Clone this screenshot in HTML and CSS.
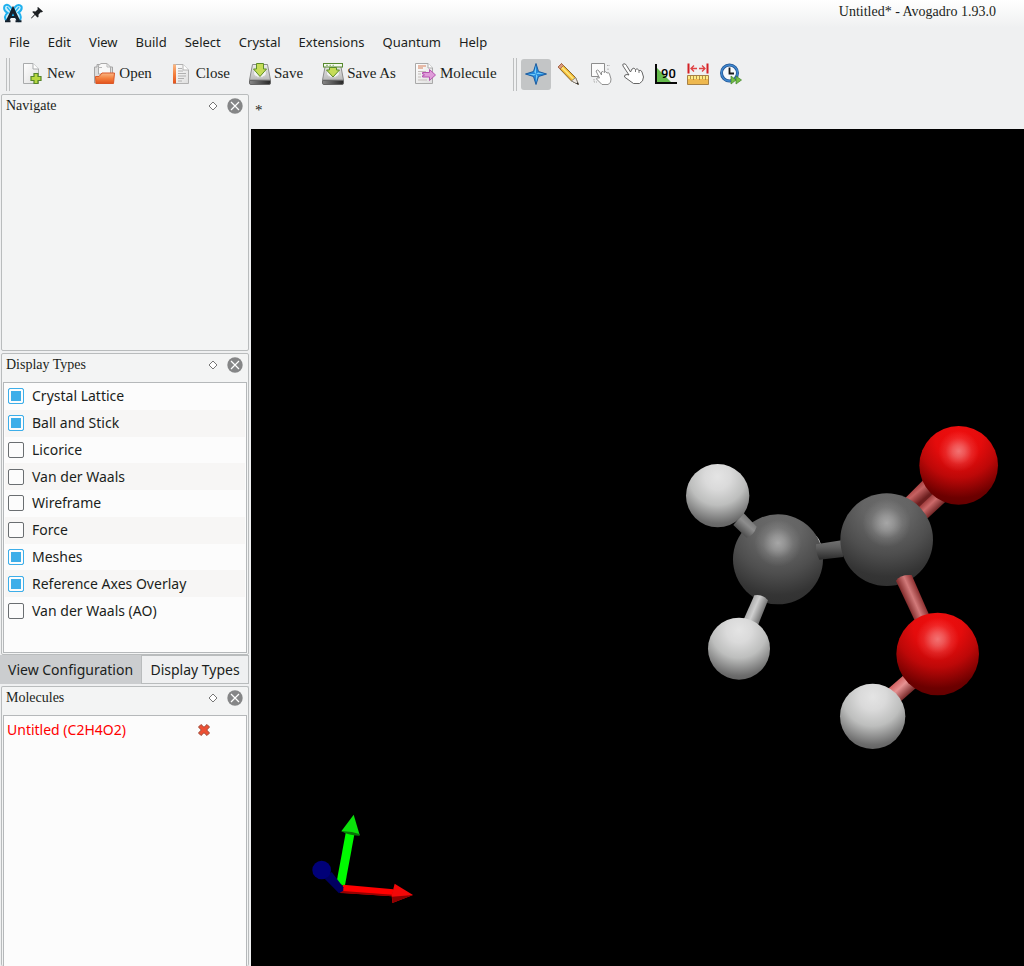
FILE: index.html
```html
<!DOCTYPE html>
<html lang="en">
<head>
<meta charset="utf-8">
<title>Untitled* - Avogadro 1.93.0</title>
<link rel="stylesheet" href="styles.css">
</head>
<body>
<header class="titlebar">
  <div class="titlebar-icons">
    <svg width="20" height="20" viewBox="0 0 20 20" aria-hidden="true">
      <path d="M1.500 3C4 0 8 3 10 8C12 2 16 .500 18.500 3.500C19.500 7 17 8.500 15.500 9.500C18.500 12 18.500 16 16 18L10 11L4 17.500C1 16 1.500 12 4.500 10C1.500 8.500 .500 5.500 1.500 3Z" fill="#c9effc" stroke="#1fb0ee" stroke-width="2"/>
      <path d="M4 4L8 9M16 4L12 9" stroke="#25b4ee" stroke-width="1.400"/>
      <path d="M4.500 18L10 6.500L15.500 18" fill="none" stroke="#14202c" stroke-width="3.200"/>
      <path d="M2 18.300H7.500M12.500 18.300H18.500M6.500 14H13.500" stroke="#14202c" stroke-width="2"/>
    </svg>
    <svg width="12" height="12" viewBox="0 0 12 12" aria-hidden="true">
      <path d="M7 0L12 4.500L10.500 5.500L10 5L7.500 7.500L7.500 10L6.500 10.500L4 8L0.500 11.500L0 11L3.500 7.300L1.300 5L2 4.200L4.500 4.500L7 2L6.200 1Z" fill="#1c1f22"/>
    </svg>
  </div>
  <h1 class="titlebar-text">Untitled* - Avogadro 1.93.0</h1>
</header>

<nav class="menubar" aria-label="Main menu">
  <button class="menu">File</button>
  <button class="menu">Edit</button>
  <button class="menu">View</button>
  <button class="menu">Build</button>
  <button class="menu">Select</button>
  <button class="menu">Crystal</button>
  <button class="menu">Extensions</button>
  <button class="menu">Quantum</button>
  <button class="menu">Help</button>
</nav>

<div class="toolbars">
  <span class="grip"></span>
  <div class="file-tools">
    <button class="file-tool">
      <svg width="22" height="22" viewBox="0 0 22 22" aria-hidden="true">
        <defs><linearGradient id="paper" x2="1" y2="1"><stop stop-color="#fff"/><stop offset="1" stop-color="#dedede"/></linearGradient></defs>
        <path d="M1.500 .500H11L16.500 6V20.500H1.500Z" fill="url(#paper)" stroke="#a9abac"/>
        <path d="M11 .500V6H16.500" fill="#fff" stroke="#a9abac"/>
        <path d="M12 10.500H16V13.500H19V17.500H16V20.500H12V17.500H9V13.500H12Z" fill="#b7d840" stroke="#56852a" stroke-width="1.200"/>
      </svg><span>New</span></button>
    <button class="file-tool">
      <svg width="22" height="22" viewBox="0 0 22 22" aria-hidden="true">
        <defs><linearGradient id="folder" x2="0" y2="1"><stop stop-color="#f9b987"/><stop offset=".5" stop-color="#f4813f"/><stop offset="1" stop-color="#e2521c"/></linearGradient></defs>
        <path d="M.500 4H3V1.500H7L9 4H18.500V20H.500Z" fill="#ddd" stroke="#a5a5a5"/>
        <path d="M4.500 11V2.500L7 .500H13L16.500 4V11Z" fill="#f8f8f8" stroke="#aaa"/>
        <path d="M13 .500V4H16.500M4.500 4.500H8" fill="none" stroke="#b9b9b9"/>
        <path d="M1.500 13.500H5L8 10H20.500L19.500 20.500H2Z" fill="url(#folder)" stroke="#db5726"/>
      </svg><span>Open</span></button>
    <button class="file-tool">
      <svg width="22" height="22" viewBox="0 0 22 22" aria-hidden="true">
        <path d="M2.500 1.500H12L17.500 7V20.500H2.500Z" fill="url(#paper)" stroke="#b1b1b1"/>
        <path d="M2 1.500H5V20.500H2Z" fill="url(#folder)"/>
        <path d="M7 5.500H11M7 8H12M7 10.500H15M7 13H15M7 15.500H13M7 18H11" stroke="#b0b0b0"/>
        <path d="M12 1.500V7H17.500" fill="#fff" stroke="#b1b1b1"/>
      </svg><span>Close</span></button>
    <button class="file-tool">
      <svg width="22" height="22" viewBox="0 0 22 22" aria-hidden="true">
        <defs>
          <linearGradient id="disk" x2="0" y2="1"><stop stop-color="#ececec"/><stop offset="1" stop-color="#bababa"/></linearGradient>
          <linearGradient id="slot"><stop stop-color="#888"/><stop offset="1" stop-color="#262626"/></linearGradient>
        </defs>
        <path d="M3.500 1.500H18.500L21.500 17H.500Z" fill="url(#disk)" stroke="#8b8b8b"/>
        <ellipse cx="11" cy="10" rx="6.500" ry="4.500" fill="#f3f3f3" stroke="#c8c8c8"/>
        <path d="M.500 17.500H21.500V20Q21.500 21.500 20 21.500H2Q.500 21.500 .500 20Z" fill="url(#slot)" stroke="#666"/>
        <path d="M7.500 .500H14.500V6H17.500L11 13.500L4.500 6H7.500Z" fill="#c6dc58" stroke="#5d8e28"/>
      </svg><span>Save</span></button>
    <button class="file-tool">
      <svg width="22" height="22" viewBox="0 0 22 22" aria-hidden="true">
        <path d="M3.500 1.500H18.500L21.500 17H.500Z" fill="url(#disk)" stroke="#8b8b8b"/>
        <ellipse cx="11" cy="10" rx="6.500" ry="4.500" fill="#f3f3f3" stroke="#c8c8c8"/>
        <path d="M.500 17.500H21.500V20Q21.500 21.500 20 21.500H2Q.500 21.500 .500 20Z" fill="url(#slot)" stroke="#666"/>
        <path d="M7.500 4.500H14.500V7H17.500L11 14L4.500 7H7.500Z" fill="#c6dc58" stroke="#5d8e28"/>
        <rect x="1.500" y=".500" width="19" height="3.500" fill="#f4faef" stroke="#56892f"/>
        <path d="M4 2.300H6M7.500 2.300H9M10.500 2.300H12" stroke="#8aae6f"/>
      </svg><span>Save As</span></button>
    <button class="file-tool">
      <svg width="22" height="22" viewBox="0 0 22 22" aria-hidden="true">
        <path d="M.500 .500H13L17.500 5V20.500H.500Z" fill="url(#paper)" stroke="#a9a9a9"/>
        <path d="M13 .500V5H17.500" fill="#fff" stroke="#a9a9a9"/>
        <path d="M3 3H11M3 5H8" stroke="#e1a78e" stroke-width="1.500"/>
        <path d="M3 8.500H11M3 11H6M3 14H6M3 17H12" stroke="#c4bdb9"/>
        <path d="M7.500 9.500H14.500V6.500L20.500 12L14.500 17.500V14H7.500V12.700H9V11H7.500Z" fill="#df9bd9" stroke="#b653b0"/>
      </svg><span>Molecule</span></button>
  </div>
  <span class="grip"></span>
  <div class="mode-tools">
    <button class="mode-tool mode-tool-active" aria-label="Navigate" aria-pressed="true">
      <svg width="22" height="22" viewBox="0 0 22 22" aria-hidden="true">
        <path d="M11 .500L13.500 8.500L21.500 11L13.500 13.500L11 21.500L8.500 13.500L.500 11L8.500 8.500Z" fill="#2489dd" stroke="#1d5c9f"/>
        <path d="M11 2.500V11L9.300 9.300ZM3 11H11L9 12.500ZM11 19V11L12.500 13ZM19 11H11L13 9.500Z" fill="#74cdf8"/>
      </svg></button>
    <button class="mode-tool" aria-label="Draw">
      <svg width="22" height="22" viewBox="0 0 22 22" aria-hidden="true">
        <path d="M1 4L4.500 .500L18.500 14.500L21.500 21.500L14.500 18Z" fill="#f2b733" stroke="#7b5c25" stroke-width=".900"/>
        <path d="M4 3.500L16.500 16" stroke="#fce57a" stroke-width="2"/>
        <path d="M1 4L4.500 .500L6.500 2.500L3 6Z" fill="#d99b7c" stroke="#a5614b" stroke-width=".800"/>
        <path d="M14.500 18L18.500 14.500L21.500 21.500Z" fill="#eee7df" stroke="#777" stroke-width=".800"/>
        <path d="M19 20.500L20.800 19.200L21.500 21.500Z" fill="#222"/>
      </svg></button>
    <button class="mode-tool" aria-label="Select">
      <svg width="22" height="22" viewBox="0 0 22 22" aria-hidden="true">
        <path d="M1.500 .500H14.500V13.500H1.500Z" fill="#fbfbfb" stroke="#8d8d8d"/>
        <path d="M17 2.500H20M18 5.500V8M4 16V19H7" stroke="#aaa" fill="none" stroke-dasharray="1.500 1"/>
        <path d="M6 8Q7.500 6 9 8L11.500 12V9Q13 7.500 14 9.500Q15.500 7.500 17 10Q19 9 19.500 11L21 16Q21.500 20 18 21.500H12L6.500 16Q6.500 14 9.500 15Z" fill="#fff" stroke="#858585" stroke-width=".900"/>
      </svg></button>
    <button class="mode-tool" aria-label="Manipulate">
      <svg width="22" height="22" viewBox="0 0 22 22" aria-hidden="true">
        <path d="M1 3Q0 1 2 .800Q3.500 .500 4.500 2.500L8.500 9L10 6Q12 4 13.500 6.500Q15 4.500 17 7.500Q19 6.500 20 9L21.500 14Q21.500 18.500 17.500 20.500H11.500L2.500 14Q2 11.500 5 11.500L7 12Z" fill="#fff" stroke="#555" stroke-width=".900"/>
        <path d="M13.500 6.500V9M17 7.500V10" stroke="#777"/>
      </svg></button>
    <button class="mode-tool" aria-label="Bond angle">
      <svg width="22" height="22" viewBox="0 0 22 22" aria-hidden="true">
        <path d="M1 4L17 20H1Z" fill="#65bb4c"/>
        <path d="M1 1V20H22" fill="none" stroke="#080808" stroke-width="2"/>
        <text x="6" y="15" class="angle-label">90</text>
      </svg></button>
    <button class="mode-tool" aria-label="Measure">
      <svg width="22" height="22" viewBox="0 0 22 22" aria-hidden="true">
        <path d="M1.500 .500V10.500M20.500 .500V10.500" stroke="#d42025" stroke-width="2"/>
        <path d="M4 5.500H10M12 5.500H18M7 2.500L4 5.500L7 8.500M15 2.500L18 5.500L15 8.500" fill="none" stroke="#df4244" stroke-width="1.300"/>
        <path d="M.500 12.500H21.500V21.500H.500Z" fill="#eeb84f" stroke="#a78146"/>
        <path d="M1 14.500H21" stroke="#ffec87" stroke-width="3"/>
        <path d="M3.500 13V16M6.500 13V17M9.500 13V16M12.500 13V17M15.500 13V16M18.500 13V17" stroke="#9a7c3e" stroke-width=".800"/>
      </svg></button>
    <button class="mode-tool" aria-label="Animation">
      <svg width="22" height="22" viewBox="0 0 22 22" aria-hidden="true">
        <circle cx="9.500" cy="10" r="8" fill="#f6f9fc" stroke="#245695" stroke-width="3"/>
        <circle cx="9.500" cy="10" r="8" fill="none" stroke="#3f88cf" stroke-width="1.400"/>
        <path d="M9.500 4.500V10.500H14" fill="none" stroke="#17191b" stroke-width="1.800"/>
        <path d="M11 13L16 17L11 21ZM16 13L21.500 17L16 21Z" fill="#75be45" stroke="#3f812c" stroke-width=".700"/>
      </svg></button>
  </div>
</div>

<div class="workspace">
  <aside class="sidebar">
    <section class="dock dock-navigate">
      <header class="dock-head"><h2 class="dock-title">Navigate</h2>
        <button class="dock-button" aria-label="Float Navigate"><svg width="10" height="10" viewBox="0 0 10 10"><path d="M5 1L9 5L5 9L1 5Z" fill="#fff" stroke="#777"/></svg></button>
        <button class="dock-button" aria-label="Close Navigate"><svg width="16" height="16" viewBox="0 0 16 16"><circle cx="8" cy="8" r="7.700" fill="#858687"/><path d="M4 4L12 12M12 4L4 12" stroke="#fff" stroke-width="1.200"/></svg></button>
      </header>
    </section>

    <section class="dock dock-display">
      <header class="dock-head"><h2 class="dock-title">Display Types</h2>
        <button class="dock-button" aria-label="Float Display Types"><svg width="10" height="10" viewBox="0 0 10 10"><path d="M5 1L9 5L5 9L1 5Z" fill="#fff" stroke="#777"/></svg></button>
        <button class="dock-button" aria-label="Close Display Types"><svg width="16" height="16" viewBox="0 0 16 16"><circle cx="8" cy="8" r="7.700" fill="#858687"/><path d="M4 4L12 12M12 4L4 12" stroke="#fff" stroke-width="1.200"/></svg></button>
      </header>
      <div class="frame type-list">
        <label class="type-row"><input class="check" type="checkbox" checked>Crystal Lattice</label>
        <label class="type-row"><input class="check" type="checkbox" checked>Ball and Stick</label>
        <label class="type-row"><input class="check" type="checkbox">Licorice</label>
        <label class="type-row"><input class="check" type="checkbox">Van der Waals</label>
        <label class="type-row"><input class="check" type="checkbox">Wireframe</label>
        <label class="type-row"><input class="check" type="checkbox">Force</label>
        <label class="type-row"><input class="check" type="checkbox" checked>Meshes</label>
        <label class="type-row"><input class="check" type="checkbox" checked>Reference Axes Overlay</label>
        <label class="type-row"><input class="check" type="checkbox">Van der Waals (AO)</label>
      </div>
    </section>

    <div class="tabs" role="tablist">
      <button class="tab" role="tab" aria-selected="false">View Configuration</button>
      <button class="tab tab-active" role="tab" aria-selected="true">Display Types</button>
    </div>

    <section class="dock dock-molecules">
      <header class="dock-head"><h2 class="dock-title">Molecules</h2>
        <button class="dock-button" aria-label="Float Molecules"><svg width="10" height="10" viewBox="0 0 10 10"><path d="M5 1L9 5L5 9L1 5Z" fill="#fff" stroke="#777"/></svg></button>
        <button class="dock-button" aria-label="Close Molecules"><svg width="16" height="16" viewBox="0 0 16 16"><circle cx="8" cy="8" r="7.700" fill="#858687"/><path d="M4 4L12 12M12 4L4 12" stroke="#fff" stroke-width="1.200"/></svg></button>
      </header>
      <div class="frame molecule-list">
        <div class="molecule-row"><span>Untitled (C2H4O2)</span>
          <button class="dock-button" aria-label="Remove molecule"><svg width="14" height="14" viewBox="0 0 14 14"><path d="M4 1.500L7 4.300L10 1.500L12.500 4L9.700 7L12.500 10L10 12.500L7 9.700L4 12.500L1.500 10L4.300 7L1.500 4Z" fill="#ee4f33" stroke="#9f4936"/></svg></button>
        </div>
      </div>
    </section>
  </aside>

  <main class="view">
    <div class="view-tab">*</div>
    <div class="scene">
      <svg class="scene-drawing" viewBox="251 129 773 837" role="img" aria-label="Acetic acid, ball and stick">
        <defs>
          <radialGradient id="hydrogen" cx=".5" cy=".2" r=".82"><stop stop-color="#e4e4e4"/><stop offset=".25" stop-color="#dadada"/><stop offset=".55" stop-color="#bdbebd"/><stop offset=".9" stop-color="#6c6c6c"/><stop offset="1" stop-color="#626262"/></radialGradient>
          <radialGradient id="carbon" cx=".5" cy=".15" r=".85"><stop stop-color="#6a6a6a"/><stop offset=".3" stop-color="#646464"/><stop offset=".6" stop-color="#4e4e4e"/><stop offset=".88" stop-color="#343434"/><stop offset="1" stop-color="#313131"/></radialGradient>
          <radialGradient id="oxygen" cx=".5" cy=".15" r=".85"><stop stop-color="#f00e0e"/><stop offset=".35" stop-color="#e40c0c"/><stop offset=".6" stop-color="#bd0808"/><stop offset=".9" stop-color="#6c0000"/><stop offset="1" stop-color="#650000"/></radialGradient>
          <radialGradient id="shine" cx=".5" cy=".32" r=".26"><stop stop-color="#fff" stop-opacity=".42"/><stop offset=".3" stop-color="#fff" stop-opacity=".3"/><stop offset=".65" stop-color="#fff" stop-opacity=".1"/><stop offset="1" stop-color="#fff" stop-opacity="0"/></radialGradient>
          <linearGradient id="single" gradientUnits="userSpaceOnUse" x1="707" y1="571" x2="750" y2="552"><stop stop-color="#873030"/><stop offset=".5" stop-color="#d27a7a"/><stop offset="1" stop-color="#8c3030"/></linearGradient>
          <linearGradient id="double-a" gradientUnits="userSpaceOnUse" x1="730" y1="232" x2="760" y2="268"><stop stop-color="#a23a3a"/><stop offset=".4" stop-color="#c56262"/><stop offset="1" stop-color="#6c1e1e"/></linearGradient>
          <linearGradient id="double-b" gradientUnits="userSpaceOnUse" x1="766" y1="270" x2="800" y2="306"><stop stop-color="#993636"/><stop offset=".4" stop-color="#cc6a6a"/><stop offset="1" stop-color="#621b1b"/></linearGradient>
          <linearGradient id="hydroxyl" gradientUnits="userSpaceOnUse" x1="680" y1="815" x2="714" y2="852"><stop stop-color="#d26363"/><stop offset=".4" stop-color="#e69292"/><stop offset="1" stop-color="#7f3030"/></linearGradient>
          <linearGradient id="carbon-bond" x2="0" y2="1"><stop stop-color="#727272"/><stop offset=".35" stop-color="#606060"/><stop offset="1" stop-color="#2b2b2b"/></linearGradient>
          <linearGradient id="methyl-upper" gradientUnits="userSpaceOnUse" x1="243" y1="328" x2="210" y2="365"><stop stop-color="#777"/><stop offset=".4" stop-color="#8d8d8d"/><stop offset="1" stop-color="#505050"/></linearGradient>
          <linearGradient id="methyl-lower" gradientUnits="userSpaceOnUse" x1="237" y1="592" x2="277" y2="609"><stop stop-color="#aaa"/><stop offset=".4" stop-color="#cfcfcf"/><stop offset="1" stop-color="#777"/></linearGradient>
        </defs>
        <g transform="translate(670 410) scale(.33333)">
          <circle cx="407" cy="411" r="46" fill="#ddd"/>
          <circle cx="324" cy="448" r="135" fill="url(#carbon)"/><circle cx="324" cy="448" r="135" fill="url(#shine)"/>
          <path d="M190 345L230 383Q252 375 260 350L220 308Z" fill="url(#methyl-upper)"/>
          <path d="M438 403L520 390V441L448 449Q437 430 438 403Z" fill="url(#carbon-bond)"/>
          <path d="M253 556Q275 550 294 571L262 650L218 635Z" fill="url(#methyl-lower)"/>
          <circle cx="143" cy="257" r="95" fill="url(#hydrogen)"/>
          <circle cx="207" cy="716" r="93" fill="url(#hydrogen)"/>
          <path d="M700 270L760 210L800 240L740 300Z" fill="url(#double-a)"/>
          <path d="M740 298L795 245L832 270L773 325Z" fill="url(#double-b)"/>
          <circle cx="866" cy="166" r="118" fill="url(#oxygen)"/><circle cx="866" cy="166" r="118" fill="url(#shine)"/>
          <circle cx="650" cy="389" r="139" fill="url(#carbon)"/><circle cx="650" cy="389" r="139" fill="url(#shine)"/>
          <path d="M678 512Q690 493 725 495L780 620L738 640Z" fill="url(#single)"/>
          <path d="M650 840L702 795L742 830L690 876Z" fill="url(#hydroxyl)"/>
          <circle cx="803" cy="732" r="124" fill="url(#oxygen)"/><circle cx="803" cy="732" r="124" fill="url(#shine)"/>
          <circle cx="608" cy="919" r="98" fill="url(#hydrogen)"/>
        </g>
        <g transform="translate(290 800) scale(.33333)">
          <path d="M168 94L194 98L164 260L140 245Z" fill="#00fa00"/>
          <path d="M191 44L209 105Q180 104 154 94Z" fill="#0be00b"/>
          <path d="M154 94Q180 92 209 102V107Q180 108 154 94Z" fill="#087508"/>
          <path d="M160 254L310 268L307 289L150 278Z" fill="#f00"/>
          <path d="M150 272L308 284L307 289L150 279Z" fill="#960000"/>
          <path d="M314 251L369 285L307 309L305 286Z" fill="#f20808"/>
          <path d="M306 290L369 285L307 309Z" fill="#8c0000"/>
          <path d="M104 236L125 216L160 262V272L147 280Z" fill="#000060"/>
          <circle cx="95" cy="210" r="28" fill="#000078"/>
        </g>
      </svg>
    </div>
  </main>
</div>
</body>
</html>
```
FILE: styles.css
```css
* {
  box-sizing: border-box;
}

body {
  display: flex;
  flex-direction: column;
  height: 100vh;
  margin: 0;
  overflow: hidden;
  background: #eff0f1;
  color: #1b1e20;
  font-family: "Noto Sans", "Open Sans", sans-serif;
  font-size: 14px;
}

button {
  padding: 0;
  border: 0;
  background: none;
  color: inherit;
  font: inherit;
}

svg {
  display: block;
}

h1,
h2 {
  margin: 0;
  font-weight: 400;
}

.titlebar,
.file-tool,
.dock-title,
.view-tab {
  font-family: "Liberation Serif", "Times New Roman", serif;
}

.titlebar {
  display: flex;
  justify-content: space-between;
  align-items: flex-start;
  flex: none;
  height: 28px;
  padding: 3px 28px 0 3px;
  background: linear-gradient(#fff, #eff0f1);
}

.titlebar-icons {
  display: flex;
  align-items: center;
  gap: 8px;
}

.titlebar-text {
  font-size: 14px;
  line-height: 18px;
}

.menubar {
  display: flex;
  flex: none;
  height: 28px;
}

.menu {
  padding: 0 9px;
  font-size: 13px;
}

.toolbars {
  display: flex;
  align-items: center;
  flex: none;
  height: 36px;
  padding: 0 6px;
}

.grip {
  flex: none;
  width: 4px;
  height: 33px;
  border: 1px solid #bdbfc0;
  border-width: 0 1px;
}

.file-tools {
  display: flex;
  gap: 19px;
  margin: 0 16px 0 12px;
}

.file-tool {
  display: flex;
  align-items: center;
  gap: 3px;
  font-size: 15px;
  line-height: 22px;
  white-space: nowrap;
}

.file-tool span {
  padding-bottom: 3px;
}

.mode-tools {
  display: flex;
  justify-content: space-between;
  width: 225px;
  margin-left: 4px;
}

.mode-tool {
  display: grid;
  place-items: center;
  width: 30px;
  height: 31px;
  border-radius: 3px;
}

.mode-tool-active {
  background: #c3c5c6;
}

.angle-label {
  font: 500 13px Roboto, sans-serif;
}

.workspace {
  display: flex;
  flex: 1;
  min-height: 0;
}

.sidebar {
  display: flex;
  flex-direction: column;
  flex: none;
  width: 251px;
  padding: 2px 2px 0 0;
}

.dock {
  display: flex;
  flex-direction: column;
  margin-left: 1px;
  border: 1px solid #b9bcbd;
  border-radius: 2px;
  background: #f3f4f4;
}

.dock-navigate {
  flex: 0 0 257px;
  margin-bottom: 2px;
}

.dock-display {
  flex: 0 0 302px;
}

.dock-molecules {
  flex: 1;
  border-bottom: 0;
}

.dock-head {
  display: flex;
  align-items: center;
  gap: 9px;
  flex: none;
  height: 22px;
  padding: 0 5px 0 4px;
}

.dock-title {
  flex: 1;
  font-size: 14px;
  line-height: 22px;
}

.frame {
  flex: 1;
  margin: 6px 1px 1px;
  border: 1px solid #b5b8ba;
  background: #fcfcfc;
}

.type-list {
  display: grid;
  grid-auto-rows: 1fr;
  padding: 0 1px 28px;
}

.type-row {
  display: flex;
  align-items: center;
  gap: 8px;
  padding-left: 3px;
  line-height: 20px;
}

.type-row:nth-child(even) {
  background: #f7f6f5;
}

.check {
  width: 16px;
  height: 16px;
  margin: 0;
  border: 1px solid #6a6e71;
  border-radius: 2px;
  background: #fcfcfc;
  appearance: none;
}

.check:checked {
  border-color: #3daee9;
  background: #3daee9;
  box-shadow: inset 0 0 0 2px #fcfcfc;
}

.tabs {
  display: flex;
  flex: none;
  height: 29px;
  margin-bottom: 2px;
}

.tab {
  padding: 0 8px;
  background: #cbcdcf;
  white-space: nowrap;
}

.tab-active {
  flex: 1;
  border: 1px solid #b9bcbd;
  background: #eff0f1;
}

.molecule-list {
  margin-bottom: 0;
  border-bottom: 0;
}

.molecule-row {
  display: flex;
  align-items: center;
  justify-content: space-between;
  height: 27px;
  padding: 0 35px 0 3px;
  color: #f00;
}

.view {
  display: flex;
  flex-direction: column;
  flex: 1;
  min-width: 0;
}

.view-tab {
  flex: none;
  height: 37px;
  padding-left: 4px;
  font-size: 15px;
  line-height: 37px;
}

.scene {
  flex: 1;
  min-height: 0;
  background: #000;
}

.scene-drawing {
  width: 100%;
  height: 100%;
}
```
